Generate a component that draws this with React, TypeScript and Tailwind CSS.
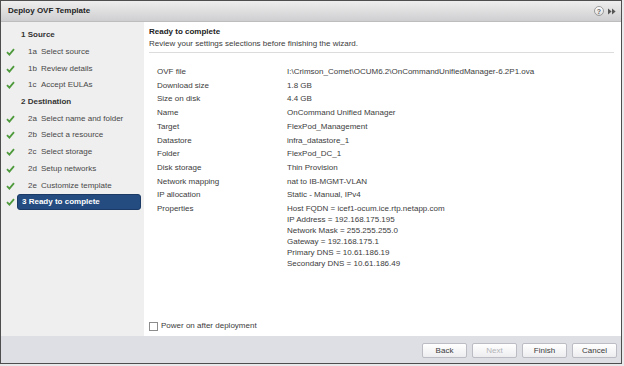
import React from "react";

const font = { fontFamily: '"Liberation Sans", Arial, sans-serif' };

type NavItem = { kind: "head" | "item" | "active"; num: string; label: string; done?: boolean };

const nav: NavItem[] = [
  { kind: "head", num: "1", label: "Source" },
  { kind: "item", num: "1a", label: "Select source", done: true },
  { kind: "item", num: "1b", label: "Review details", done: true },
  { kind: "item", num: "1c", label: "Accept EULAs", done: true },
  { kind: "head", num: "2", label: "Destination" },
  { kind: "item", num: "2a", label: "Select name and folder", done: true },
  { kind: "item", num: "2b", label: "Select a resource", done: true },
  { kind: "item", num: "2c", label: "Select storage", done: true },
  { kind: "item", num: "2d", label: "Setup networks", done: true },
  { kind: "item", num: "2e", label: "Customize template", done: true },
  { kind: "active", num: "3", label: "Ready to complete", done: true },
];

const rows: [string, string][] = [
  ["OVF file", "I:\\Crimson_Comet\\OCUM6.2\\OnCommandUnifiedManager-6.2P1.ova"],
  ["Download size", "1.8 GB"],
  ["Size on disk", "4.4 GB"],
  ["Name", "OnCommand Unified Manager"],
  ["Target", "FlexPod_Management"],
  ["Datastore", "infra_datastore_1"],
  ["Folder", "FlexPod_DC_1"],
  ["Disk storage", "Thin Provision"],
  ["Network mapping", "nat to IB-MGMT-VLAN"],
  ["IP allocation", "Static - Manual, IPv4"],
];

const props = [
  "Host FQDN = icef1-ocum.ice.rtp.netapp.com",
  "IP Address = 192.168.175.195",
  "Network Mask = 255.255.255.0",
  "Gateway = 192.168.175.1",
  "Primary DNS = 10.61.186.19",
  "Secondary DNS = 10.61.186.49",
];

function Check() {
  return (
    <svg width="9" height="8" viewBox="0 0 9 8" className="shrink-0">
      <polyline points="1,4.2 3.4,6.6 8,1.2" fill="none" stroke="#4f9a3c" strokeWidth="1.8" />
    </svg>
  );
}

function Button({ label, disabled }: { label: string; disabled?: boolean }) {
  return (
    <div
      className={`w-[45px] h-[15px] flex items-center justify-center rounded-[2px] border border-[#bcbcc4] bg-gradient-to-b from-[#ffffff] to-[#ededf0] text-[8px] ${
        disabled ? "text-[#b4b4b8]" : "text-[#3a3a3a]"
      }`}
    >
      {label}
    </div>
  );
}

export default function App() {
  return (
    <div className="w-[624px] h-[366px] bg-[#e9e9ec]" style={font}>
      <div className="w-[622px] h-[364px] border border-[#4e4e4e] flex flex-col bg-white">
        {/* title bar */}
        <div className="h-[21px] flex items-center justify-between pl-[7px] pr-[5px] bg-gradient-to-b from-[#eeeeee] to-[#cfcfd1] border-b border-[#bdbdbd]">
          <span className="text-[8px] font-bold text-[#222]">Deploy OVF Template</span>
          <div className="flex items-center gap-[4px]">
            <span className="w-[10px] h-[10px] rounded-full border border-[#9a9a9a] bg-gradient-to-b from-white to-[#dedede] flex items-center justify-center text-[7px] leading-none text-[#666] font-bold">
              ?
            </span>
            <svg width="8" height="7" viewBox="0 0 8 7">
              <polygon points="0,0.5 3.6,3.5 0,6.5" fill="#555" />
              <polygon points="4,0.5 7.6,3.5 4,6.5" fill="#555" />
            </svg>
          </div>
        </div>

        <div className="flex flex-1 min-h-0">
          {/* left nav */}
          <div className="w-[143px] bg-[#efefef] pt-[5px] flex flex-col">
            {nav.map((n) => (
              <div key={n.num} className="h-[16.7px] flex items-center text-[8px]">
                <div className="w-[15px] pl-[5px] flex items-center">{n.done && <Check />}</div>
                {n.kind === "head" && (
                  <span className="pl-[5px] font-bold text-[#333]">
                    {n.num} {n.label}
                  </span>
                )}
                {n.kind === "item" && (
                  <span className="pl-[12px] text-[#484848] flex">
                    <span className="w-[13px]">{n.num}</span>
                    <span>{n.label}</span>
                  </span>
                )}
                {n.kind === "active" && (
                  <div className="ml-[1px] w-[124px] h-[16px] rounded-[3px] bg-[#244c80] border border-[#1b3a66] flex items-center pl-[4px] text-white font-bold">
                    {n.num} {n.label}
                  </div>
                )}
              </div>
            ))}
          </div>

          {/* content */}
          <div className="flex-1 flex flex-col pl-[5px] pr-[7px] pt-[4px] text-[8px] text-[#3c3c3c]">
            <div className="leading-[12px] font-bold text-[#222]">Ready to complete</div>
            <div className="leading-[12px]">Review your settings selections before finishing the wizard.</div>
            <div className="mt-[2px] h-px bg-[#dcdcdc]" />
            <div className="mt-[12px] pl-[8px] flex flex-col">
              {rows.map(([k, v]) => (
                <div key={k} className="flex leading-[13.7px]">
                  <span className="w-[130px] shrink-0">{k}</span>
                  <span>{v}</span>
                </div>
              ))}
              <div className="flex leading-[11px] pt-[1px]">
                <span className="w-[130px] shrink-0">Properties</span>
                <div className="flex flex-col">
                  {props.map((p) => (
                    <span key={p}>{p}</span>
                  ))}
                </div>
              </div>
            </div>
            <div className="mt-auto mb-[4px] flex items-center gap-[3px]">
              <span className="w-[9px] h-[9px] border border-[#8c8c8c] bg-white" />
              <span>Power on after deployment</span>
            </div>
          </div>
        </div>

        {/* footer */}
        <div className="h-[27px] bg-[#dedee5] flex justify-end items-start pt-[7px] pr-[4px] gap-[5px]">
          <Button label="Back" />
          <Button label="Next" disabled />
          <Button label="Finish" />
          <Button label="Cancel" />
        </div>
      </div>
    </div>
  );
}
